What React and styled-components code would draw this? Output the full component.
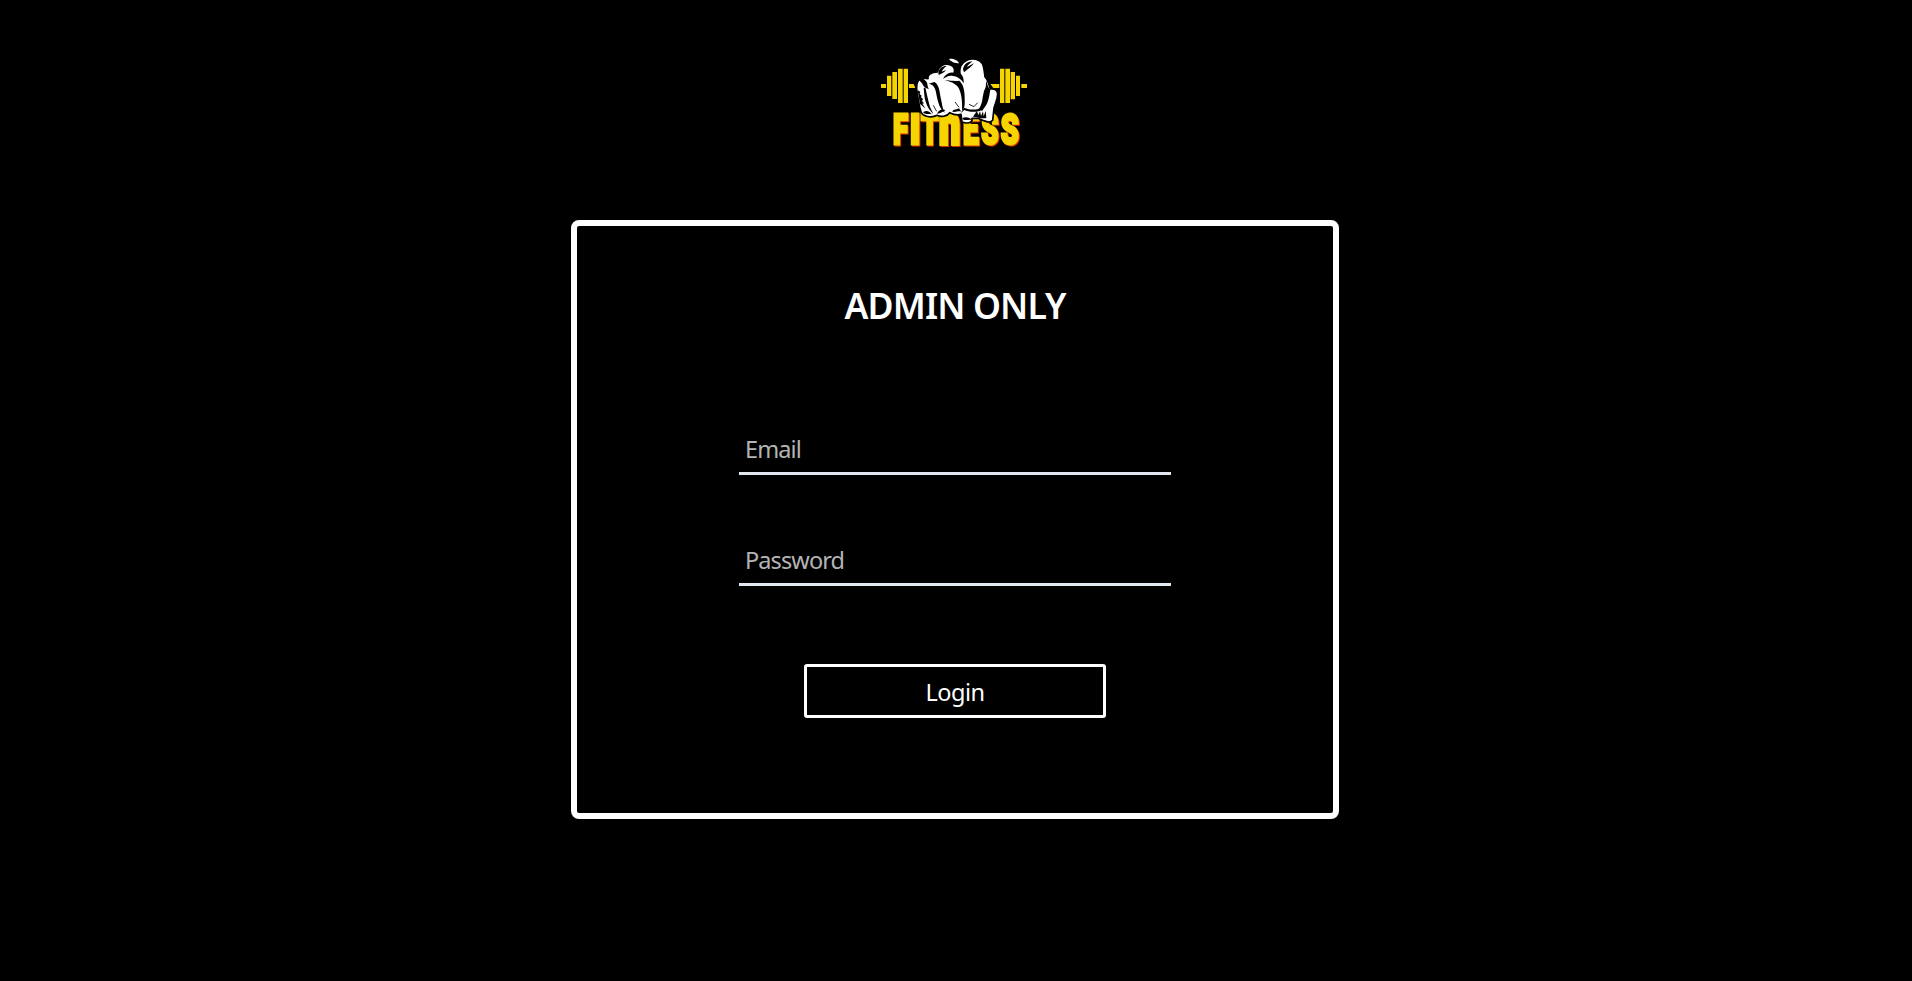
import React from "react";
import styled, { createGlobalStyle } from "styled-components";

const GlobalStyle = createGlobalStyle`
  * { box-sizing: border-box; }
  body { margin: 0; background: #000; font-family: "Noto Sans", "Open Sans", sans-serif; }
`;

const Page = styled.main`
  display: flex;
  flex-direction: column;
  align-items: center;
  min-height: 981px;
  padding: 50px 2px 0 0;
  background: #000;
  color: #fff;
`;

const Logo = styled.svg`
  display: block;
  width: 164px;
  height: 104px;
  margin-bottom: 66px;
  margin-right: 2px;
`;

const Letters = styled.g`
  fill: #f5d400;
  stroke: #f5d400;
  stroke-width: 7px;
  stroke-linejoin: miter;
  font-family: Roboto, sans-serif;
  font-weight: 900;
  font-size: 100px;
  filter: drop-shadow(3px 3px 0 #d92c08);
`;

const Card = styled.form`
  display: flex;
  flex-direction: column;
  align-items: center;
  width: 768px;
  height: 599px;
  padding-top: 52px;
  border: 6px solid #fff;
  border-radius: 8px;
`;

const Title = styled.h1`
  margin: 0 0 94px;
  font-size: 35.6px;
  font-weight: 600;
  line-height: 54px;
  letter-spacing: -0.85px;
  white-space: nowrap;
`;

const Field = styled.input`
  display: block;
  width: 432px;
  height: 49px;
  margin-bottom: 62px;
  padding: 0 6px;
  border: 0;
  border-bottom: 3px solid #e2e8f0;
  border-radius: 0;
  outline: 0;
  background: transparent;
  color: #fff;
  font: 400 23.5px/36px "Noto Sans", sans-serif;
  letter-spacing: -0.9px;
  &::placeholder { color: #b4b4b4; opacity: 1; }
`;

const LoginButton = styled.button`
  width: 302px;
  height: 54px;
  margin-top: 16px;
  padding: 2px 0 0;
  border: 3px solid #fff;
  border-radius: 3px;
  background: #000;
  color: #fff;
  font: 400 23.5px/36px "Noto Sans", sans-serif;
  letter-spacing: -0.5px;
`;

const WORD = [
  ["F", 63, 0.82, 1.3], ["I", 113, 1.06, 1.3], ["T", 147, 0.83, 1.3], ["n", 201, 1.12, 1.68],
  ["E", 273, 0.84, 1.3], ["S", 328, 0.83, 1.27], ["S", 386, 0.87, 1.27],
];

function FitnessLogo() {
  return (
    <Logo viewBox="0 0 492 312" role="img" aria-label="Fitness">
      <g fill="#f5d400">
        <path d="M27 102h15v12H27zM45 77h13v61H45zM61 66h14v81H61zM78 56h14v103H78zM95 56h13v103H95zM111 102h14l5 12h-19z" />
        <path d="M355 102h27v12h-18zM384 56h13v103h-13zM400 56h14v103h-14zM416 66h13v82h-13zM432 77h12v61h-12zM448 102h17v12h-17z" />
      </g>
      <Letters>
        {WORD.map(([ch, x, sx, sy], i) => (
          <text key={i} transform={`translate(${x} 283) scale(${sx} ${sy})`}>{ch}</text>
        ))}
      </Letters>
      <path fill="#fff" stroke="#000" strokeWidth="5" strokeLinejoin="round" d="M134 118C133 102 138 87 151 84L168 86C165 75 177 66 196 66C201 48 215 40 230 43C244 45 254 57 263 69C262 52 271 37 286 30C300 23 323 27 331 41C336 50 337 65 339 81C347 86 349 99 355 117C367 115 377 120 377 132C377 148 370 160 366 174L362 211C353 222 338 213 318 205L300 205C302 213 296 220 281 219L270 216L267 193C254 197 243 193 233 188C225 200 207 202 195 196C183 203 158 202 149 190C143 180 140 157 134 118Z" />
      <path fill="#fff" d="M231 27C242 25 257 30 261 40C250 40 238 37 231 27Z" />
      <g fill="#000">
        <path d="M142 91C145 83 155 84 164 96C168 103 165 111 171 117C163 115 157 113 153 106C151 99 147 98 142 91Z" />
        <path d="M160 112C164 132 169 153 174 171L184 192C168 176 161 159 158 143L155 115Z" />
        <path d="M187 96C192 99 196 103 198 109C203 117 204 137 209 157C211 170 213 180 219 188C204 179 198 157 194 137C191 116 186 103 170 101Z" />
        <path d="M199 66C203 53 215 46 224 48C218 52 212 58 209 65L222 60C217 69 208 71 200 75Z" />
        <path d="M230 43C248 43 260 57 267 72C274 80 276 89 275 100C269 88 257 80 243 78C230 75 223 81 213 86C221 72 232 65 244 68C248 57 242 49 230 43Z" />
        <path d="M217 90C237 92 249 94 262 92C274 103 278 121 278 145C278 164 280 172 270 182C272 154 268 126 258 111C248 99 235 95 217 90Z" />
        <path d="M273 58C275 43 287 35 301 34C294 40 289 44 285 51C293 48 300 43 306 40C299 49 289 57 276 67Z" />
        <path d="M343 92C346 100 346 110 355 118C353 132 351 147 346 158C341 169 336 173 331 182L319 180C327 168 331 156 332 142L336 123L341 112Z" />
        <path d="M276 173C293 180 312 181 328 173L325 182C306 188 291 186 277 180L266 190Z" />
        <path d="M314 184L320 195L324 183L327 198L333 184L335 199L341 183L343 204C332 207 316 201 303 200Z" />
        <path d="M271 204C281 200 294 202 300 210C290 208 282 212 274 209Z" />
        <path d="M154 186C165 178 174 186 180 193C170 190 163 195 154 188ZM195 191C201 179 211 176 221 181C211 185 204 192 195 191ZM240 184C246 177 254 179 261 175L268 185C258 181 248 190 240 184Z" />
        <path d="M137 120L145 126L143 132L149 137L147 142L153 147L150 153L156 160L151 161L161 176L144 162Z" />
      </g>
      <path fill="none" stroke="#000" strokeWidth="2.5" d="M184 166L194 184M249 156L261 172M291 163L306 170M317 158L306 170" />
    </Logo>
  );
}

export default function App() {
  return (
    <>
      <GlobalStyle />
      <Page>
        <FitnessLogo />
        <Card onSubmit={(e) => e.preventDefault()}>
          <Title>ADMIN ONLY</Title>
          <Field type="email" placeholder="Email" />
          <Field type="password" placeholder="Password" />
          <LoginButton type="submit">Login</LoginButton>
        </Card>
      </Page>
    </>
  );
}
